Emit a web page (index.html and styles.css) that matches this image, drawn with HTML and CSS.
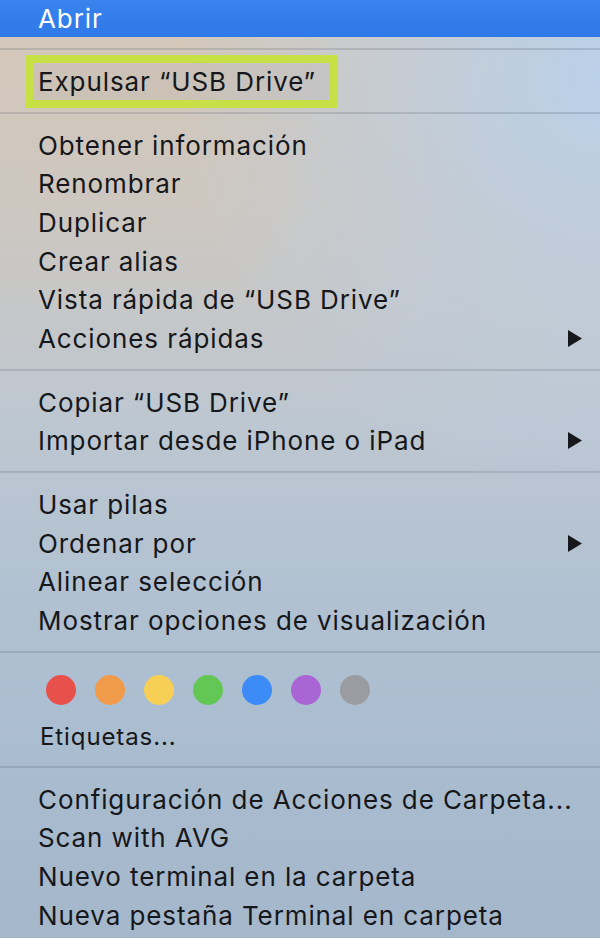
FILE: index.html
```html
<!DOCTYPE html>
<html lang="es">
<head>
    <meta charset="UTF-8">
    <title>Menú contextual</title>
    <link rel="stylesheet" href="styles.css">
</head>
<body>
<div class="menu">
    <div class="item selected">Abrir</div>
    <div class="separator"></div>

    <div class="item"><span class="highlight">Expulsar “USB Drive”</span></div>
    <div class="separator"></div>

    <div class="item">Obtener información</div>
    <div class="item">Renombrar</div>
    <div class="item">Duplicar</div>
    <div class="item">Crear alias</div>
    <div class="item">Vista rápida de “USB Drive”</div>
    <div class="item submenu">Acciones rápidas
        <svg class="arrow" viewBox="0 0 14 17"><path d="M0 0 L14 8.5 L0 17 Z"/></svg>
    </div>
    <div class="separator"></div>

    <div class="item">Copiar “USB Drive”</div>
    <div class="item submenu">Importar desde iPhone o iPad
        <svg class="arrow" viewBox="0 0 14 17"><path d="M0 0 L14 8.5 L0 17 Z"/></svg>
    </div>
    <div class="separator"></div>

    <div class="item">Usar pilas</div>
    <div class="item submenu">Ordenar por
        <svg class="arrow" viewBox="0 0 14 17"><path d="M0 0 L14 8.5 L0 17 Z"/></svg>
    </div>
    <div class="item">Alinear selección</div>
    <div class="item">Mostrar opciones de visualización</div>
    <div class="separator"></div>

    <div class="tags">
        <span class="dot red"></span>
        <span class="dot orange"></span>
        <span class="dot yellow"></span>
        <span class="dot green"></span>
        <span class="dot blue"></span>
        <span class="dot purple"></span>
        <span class="dot gray"></span>
    </div>
    <div class="item tags-label">Etiquetas...</div>
    <div class="separator"></div>

    <div class="item">Configuración de Acciones de Carpeta...</div>
    <div class="item">Scan with AVG</div>
    <div class="item">Nuevo terminal en la carpeta</div>
    <div class="item">Nueva pestaña Terminal en carpeta</div>
</div>
</body>
</html>
```

FILE: styles.css
```css
body {
    margin: 0;
    width: 600px;
    height: 938px;
    overflow: hidden;
    font-family: Inter, "Liberation Sans", sans-serif;
}

.menu {
    height: 100%;
    background:
        radial-gradient(ellipse 70% 45% at 100% 8%, rgba(184, 208, 234, 0.95), rgba(184, 208, 234, 0) 100%),
        linear-gradient(180deg, #d5c8b9 0%, #cdc7c0 22%, #bdc7d1 45%, #adbfd1 70%, #a4b7cb 100%);
}

.item {
    display: flex;
    align-items: center;
    height: 38.7px;
    padding: 0 18px 0 38px;
    font-size: 26px;
    letter-spacing: 0.9px;
    color: #16171a;
    white-space: nowrap;
}

.selected {
    height: 37px;
    background: linear-gradient(180deg, #3983ee, #2e78e8);
    color: #fff;
}

.separator {
    height: 2px;
    margin: 11px 0 12px;
    background: rgba(90, 100, 112, 0.22);
}

/* the annotation box around "Expulsar" */
.highlight {
    display: flex;
    align-items: center;
    height: 37px;
    margin-left: -12px;
    padding: 0 13px 0 4px;
    border: 8px solid #c6e046;
    background: rgba(120, 110, 100, 0.06);
}

.submenu {
    justify-content: space-between;
}

.arrow {
    width: 14px;
    height: 17px;
    fill: #16181c;
}

.tags {
    display: flex;
    align-items: center;
    gap: 19px;
    height: 50px;
    padding-left: 46px;
}

.dot {
    width: 30px;
    height: 30px;
    border-radius: 50%;
}

.red { background: #e8504b; }
.orange { background: #f09b4a; }
.yellow { background: #f6cf54; }
.green { background: #63c755; }
.blue { background: #3d8bf6; }
.purple { background: #a965d3; }
.gray { background: #9b9ca1; }

.tags-label {
    height: 37px;
    padding-top: 3px;
    padding-left: 40px;
    font-size: 24px;
}
```
